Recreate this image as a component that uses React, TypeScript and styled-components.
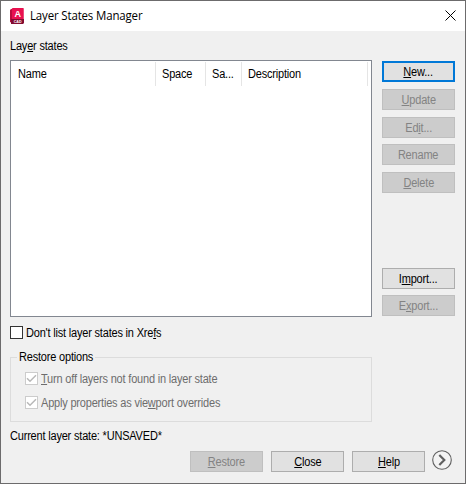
import React from "react";
import styled, { createGlobalStyle, css } from "styled-components";

const GlobalStyle = createGlobalStyle`
  * { box-sizing: border-box; }
  body { margin: 0; background: #f0f0f0; }
`;

const Dialog = styled.div`
  width: 466px;
  height: 484px;
  overflow: hidden;
  border: 1px solid #6c6b6c;
  background: #f0f0f0;
  color: #000;
  font: 12px/14px "Liberation Sans", Arial, sans-serif;
  display: flex;
  flex-direction: column;
`;

const TitleBar = styled.header`
  flex: none;
  height: 30px;
  padding: 0 9px;
  background: #fff;
  display: flex;
  align-items: center;
  svg { flex: none; }
  svg:last-child { margin-bottom: 2px; }
`;

const Title = styled.h1`
  flex: 1;
  margin: 0 0 0 5px;
  font: 400 12px/16px "Open Sans", "Segoe UI", sans-serif;
  letter-spacing: -0.15px;
  transform: scaleX(0.955);
  transform-origin: left;
`;

/* Condensed label face; $center keeps the squeeze symmetric inside buttons. */
const Label = styled.span<{ $center?: boolean }>`
  display: inline-block;
  white-space: nowrap;
  letter-spacing: -0.2px;
  transform: scaleX(0.915);
  transform-origin: ${(p) => (p.$center ? "center" : "left")};
  u { text-underline-offset: 1px; text-decoration-thickness: 1px; text-decoration-skip-ink: none; }
`;

const Content = styled.main`
  padding: 8px 10px 0 9px;
  display: flex;
  flex-direction: column;
`;

const ListRow = styled.div`
  margin-top: 7px;
  display: flex;
  justify-content: space-between;
`;

const ListBox = styled.div`
  width: 362px;
  height: 257px;
  border: 1px solid #828790;
  background: #fff;
`;

const ListHeader = styled.div`
  margin: 1px 4px 0 0;
  height: 24px;
  display: grid;
  grid-template-columns: 145px 50px 36px 126px;
`;

const HeaderCell = styled.div`
  border-right: 1px solid #e5e5e5;
  padding: 5px 0 0 6px;
  &:first-child { padding-left: 7px; }
`;

const SideButtons = styled.div`
  display: grid;
  grid-template-rows: repeat(7, 21px);
  row-gap: 7px;
  padding-top: 1px;
  align-content: start;
  & > :nth-child(n + 4) { margin-top: -1px; margin-bottom: 1px; }
  & > :nth-child(6) { margin-top: 67px; }
  & > :nth-child(7) { margin-top: 66px; }
`;

const Button = styled.button<{ $primary?: boolean }>`
  width: 73px;
  height: 21px;
  padding: 1px 0 0;
  border: 1px solid #adadad;
  background: #e1e1e1;
  color: #000;
  font: inherit;
  display: flex;
  align-items: center;
  justify-content: center;
  ${(p) => p.$primary && css`border: 2px solid #0078d7;`}
  &:disabled {
    border-color: #bfbfbf;
    background: #ccc;
    color: #838383;
  }
`;

const CheckRow = styled.div<{ $disabled?: boolean }>`
  height: 13px;
  display: flex;
  align-items: center;
  gap: 3px;
  color: ${(p) => (p.$disabled ? "#6d6d6d" : "#000")};
`;

const ListOption = styled(CheckRow)`
  margin-top: 9px;
`;

const CheckBox = styled.span<{ $disabled?: boolean }>`
  width: 13px;
  height: 13px;
  border: 1px solid ${(p) => (p.$disabled ? "#ccc" : "#333")};
  background: #fff;
  display: flex;
`;

const Group = styled.fieldset`
  width: 362px;
  height: 72px;
  margin: 11px 0 0;
  padding: 0 0 0 14px;
  min-width: 0;
  border: 1px solid #dcdcdc;
  legend {
    width: 78px;
    height: 14px;
    margin-left: -8px;
    padding: 0 2px;
  }
`;

const Options = styled.div`
  padding-top: 8px;
  display: flex;
  flex-direction: column;
  gap: 11px;
`;

const Status = styled.div`
  margin-top: 7px;
  height: 14px;
`;

const Footer = styled.footer`
  margin: 8px 3px 0 0;
  display: flex;
  justify-content: flex-end;
  gap: 8px;
  svg { margin: -1px 0 0 -1px; }
`;

const AppIcon = () => (
  <svg width="15" height="17" viewBox="0 0 15 17">
    <path d="M3 0H13.5V11H0V2Z" fill="#e60f4b" />
    <path d="M0 2L2 1V15L0 14Z" fill="#b90b3c" />
    <path d="M2 0.5H13.5V11H2Z" fill="#e91150" />
    <path d="M1 11H14V15L13 16H1Z" fill="#830b30" />
    <text x="7.8" y="9" textAnchor="middle" fontSize="9" fontWeight="700" fontFamily="Liberation Sans, sans-serif" fill="#fff">A</text>
    <text x="7.6" y="15" textAnchor="middle" fontSize="3.6" fontWeight="700" fontFamily="Liberation Sans, sans-serif" fill="#fff">CAD</text>
  </svg>
);

const CloseIcon = () => (
  <svg width="11" height="11" viewBox="0 0 11 11">
    <path d="M0.5 0.5L10.5 10.5M10.5 0.5L0.5 10.5" stroke="#000" strokeWidth="1" />
  </svg>
);

const Tick = () => (
  <svg width="11" height="11" viewBox="0 0 11 11">
    <path d="M1 5.2L4 8.2L10 2.2" fill="none" stroke="#b8b8b8" strokeWidth="1.5" />
  </svg>
);

const MoreIcon = () => (
  <svg width="20" height="20" viewBox="0 0 20 20">
    <circle cx="10" cy="10" r="9.3" fill="#f3f3f3" stroke="#606060" strokeWidth="1.1" />
    <path d="M7.3 5L12.3 10L7.3 15" fill="none" stroke="#606060" strokeWidth="2.2" />
  </svg>
);

export default function App() {
  return (
    <>
      <GlobalStyle />
      <Dialog>
        <TitleBar>
          <AppIcon />
          <Title>Layer States Manager</Title>
          <CloseIcon />
        </TitleBar>
        <Content>
          <Label>Lay<u>e</u>r states</Label>
          <ListRow>
            <ListBox>
              <ListHeader>
                <HeaderCell><Label>Name</Label></HeaderCell>
                <HeaderCell><Label>Space</Label></HeaderCell>
                <HeaderCell><Label>Sa...</Label></HeaderCell>
                <HeaderCell><Label>Description</Label></HeaderCell>
              </ListHeader>
            </ListBox>
            <SideButtons>
              <Button $primary><Label $center><u>N</u>ew...</Label></Button>
              <Button disabled><Label $center><u>U</u>pdate</Label></Button>
              <Button disabled><Label $center>Ed<u>i</u>t...</Label></Button>
              <Button disabled><Label $center>Rename</Label></Button>
              <Button disabled><Label $center><u>D</u>elete</Label></Button>
              <Button><Label $center>I<u>m</u>port...</Label></Button>
              <Button disabled><Label $center>E<u>x</u>port...</Label></Button>
            </SideButtons>
          </ListRow>
          <ListOption>
            <CheckBox />
            <Label>Don't list layer states in Xre<u>f</u>s</Label>
          </ListOption>
          <Group>
            <legend><Label>Restore options</Label></legend>
            <Options>
              <CheckRow $disabled>
                <CheckBox $disabled><Tick /></CheckBox>
                <Label><u>T</u>urn off layers not found in layer state</Label>
              </CheckRow>
              <CheckRow $disabled>
                <CheckBox $disabled><Tick /></CheckBox>
                <Label>Apply properties as vie<u>w</u>port overrides</Label>
              </CheckRow>
            </Options>
          </Group>
          <Status><Label>Current layer state: *UNSAVED*</Label></Status>
          <Footer>
            <Button disabled><Label $center><u>R</u>estore</Label></Button>
            <Button><Label $center><u>C</u>lose</Label></Button>
            <Button><Label $center><u>H</u>elp</Label></Button>
            <MoreIcon />
          </Footer>
        </Content>
      </Dialog>
    </>
  );
}
